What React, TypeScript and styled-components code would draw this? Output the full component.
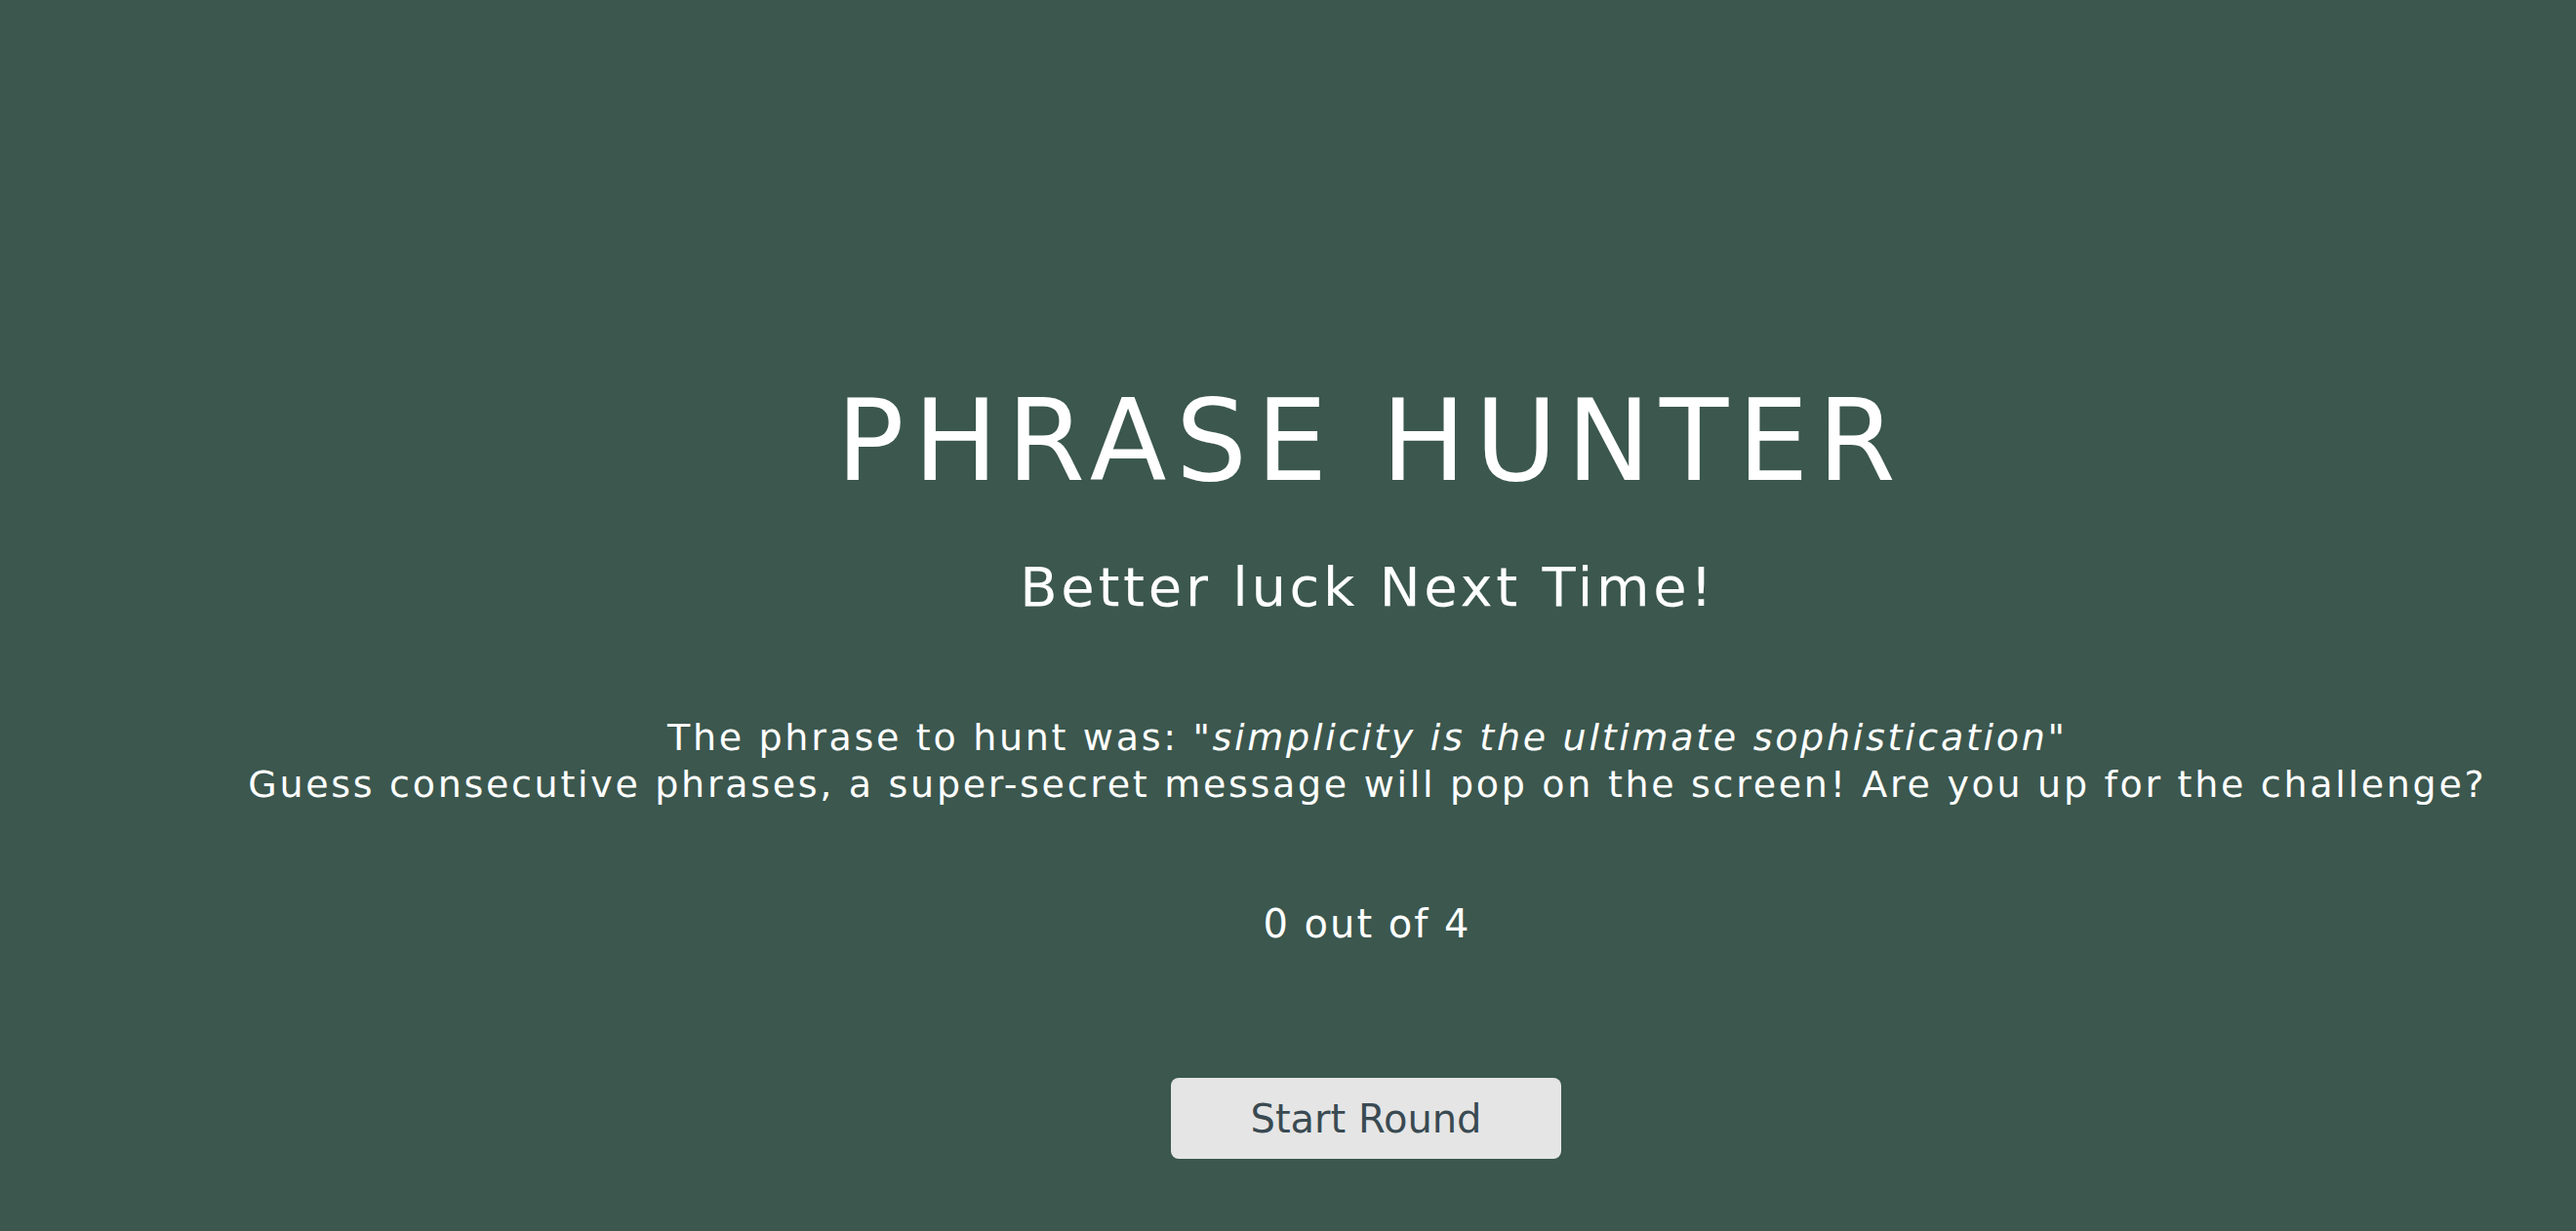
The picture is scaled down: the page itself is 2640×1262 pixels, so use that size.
import React from "react";
import styled, { createGlobalStyle } from "styled-components";

const GlobalStyle = createGlobalStyle`
  html, body {
    margin: 0;
    padding: 0;
    background: #3b574e;
  }
  body {
    font-family: "DejaVu Sans", "Open Sans", sans-serif;
    color: #ffffff;
  }
`;

const Page = styled.main`
  box-sizing: border-box;
  width: 100%;
  min-height: 1262px;
  padding: 395px 0 0 160px;
  display: flex;
  flex-direction: column;
  align-items: center;
  text-align: center;
`;

const Title = styled.h1`
  margin: 0 -9.5px 0 0;
  font-size: 115px;
  line-height: 115px;
  font-weight: 400;
  letter-spacing: 9.5px;
  white-space: nowrap;
`;

const Subtitle = styled.h2`
  margin: 64px -3.7px 0 0;
  font-size: 56px;
  line-height: 56px;
  font-weight: 400;
  letter-spacing: 3.7px;
  white-space: nowrap;
`;

const Message = styled.p`
  margin: 102px -2.7px 0 0;
  font-size: 38px;
  line-height: 48px;
  font-weight: 400;
  letter-spacing: 2.7px;
  white-space: nowrap;
`;

const Phrase = styled.em`
  font-style: italic;
`;

const Score = styled.p`
  margin: 99px -2px 0 0;
  font-size: 40px;
  line-height: 40px;
  letter-spacing: 2px;
  white-space: nowrap;
`;

const StartButton = styled.button`
  margin-top: 138px;
  width: 400px;
  height: 83px;
  border: none;
  border-radius: 8px;
  background: #e5e5e5;
  color: #3a4a52;
  font-family: "DejaVu Sans", "Open Sans", sans-serif;
  font-size: 40px;
  line-height: 40px;
  padding: 0;
  cursor: pointer;
`;

export default function App() {
  return (
    <>
      <GlobalStyle />
      <Page>
        <Title>PHRASE HUNTER</Title>
        <Subtitle>Better luck Next Time!</Subtitle>
        <Message>
          The phrase to hunt was: "<Phrase>simplicity is the ultimate sophistication</Phrase>"
          <br />
          Guess consecutive phrases, a super-secret message will pop on the screen! Are you up for the challenge?
        </Message>
        <Score>0 out of 4</Score>
        <StartButton>Start Round</StartButton>
      </Page>
    </>
  );
}
